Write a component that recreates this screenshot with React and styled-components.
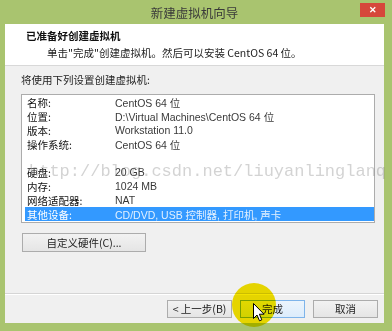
import React from "react"
import styled, { createGlobalStyle } from "styled-components"

const GlobalStyle = createGlobalStyle`
  html, body {
    margin: 0;
    padding: 0;
    overflow: hidden;
  }
  body {
    font-family: "Liberation Sans", "Noto Sans CJK SC", sans-serif;
  }
`

const rows = [
  ["名称:", "CentOS 64 位"],
  ["位置:", "D:\\Virtual Machines\\CentOS 64 位"],
  ["版本:", "Workstation 11.0"],
  ["操作系统:", "CentOS 64 位"],
  null,
  ["硬盘:", "20 GB"],
  ["内存:", "1024 MB"],
  ["网络适配器:", "NAT"],
  ["其他设备:", "CD/DVD, USB 控制器, 打印机, 声卡", true],
]

export default function App() {
  return (
    <>
      <GlobalStyle />
      <Window>
        <TitleBar>
          <span />
          <Title>新建虚拟机向导</Title>
          <CloseButton>✕</CloseButton>
        </TitleBar>
        <Content>
          <Header>
            <Heading>已准备好创建虚拟机</Heading>
            <SubHeading>单击"完成"创建虚拟机。然后可以安装 CentOS 64 位。</SubHeading>
          </Header>
          <Body>
            <Intro>将使用下列设置创建虚拟机:</Intro>
            <ListBox>
              {rows.map((row, i) =>
                row ? (
                  <Row key={i} selected={row[2]}>
                    <Label>{row[0]}</Label>
                    <Value>{row[1]}</Value>
                  </Row>
                ) : (
                  <Row key={i} />
                )
              )}
            </ListBox>
            <CustomButton>自定义硬件(C)...</CustomButton>
          </Body>
          <Footer>
            <DialogButton>&lt; 上一步(B)</DialogButton>
            <DialogButton primary>完成</DialogButton>
            <DialogButton>取消</DialogButton>
          </Footer>
        </Content>
        <Watermark>http://blog.csdn.net/liuyanlinglanq</Watermark>
        <Highlight />
        <Cursor width="12" height="19" viewBox="0 0 12 19">
          <path
            d="M0.5 0.5 L0.5 15.5 L4 12 L6.5 17.8 L8.8 16.8 L6.4 11.2 L11 11.2 Z"
            fill="#fff"
            stroke="#000"
            strokeWidth="1"
            strokeLinejoin="round"
          />
        </Cursor>
      </Window>
    </>
  )
}

const Window = styled.div`
  position: relative;
  width: 392px;
  height: 331px;
  box-sizing: border-box;
  background: #a9c46f;
  padding: 0 8px 8px 5px;
  display: flex;
  flex-direction: column;
  overflow: hidden;
`

const TitleBar = styled.div`
  height: 24px;
  display: grid;
  grid-template-columns: 1fr auto 1fr;
  align-items: center;
`

const Title = styled.div`
  font-family: "Noto Sans CJK SC", sans-serif;
  font-size: 12.5px;
  color: #3a3a3a;
  padding-top: 1px;
`

const CloseButton = styled.div`
  justify-self: end;
  align-self: start;
  margin-top: 3px;
  margin-right: -1px;
  width: 25px;
  height: 14px;
  background: #d6473b;
  color: #fff;
  font-size: 9px;
  font-weight: bold;
  display: flex;
  align-items: center;
  justify-content: center;
`

const Content = styled.div`
  flex: 1;
  display: flex;
  flex-direction: column;
  background: #f0f0f0;
`

const Header = styled.div`
  height: 42px;
  background: #fff;
  border-bottom: 1px solid #d8d8d8;
  padding: 5px 0 0 21px;
  box-sizing: border-box;
`

const Heading = styled.div`
  font-family: "Noto Sans CJK SC", sans-serif;
  font-size: 10.5px;
  font-weight: bold;
  color: #111;
  line-height: 14px;
`

const SubHeading = styled.div`
  font-family: "Noto Sans CJK SC", sans-serif;
  font-size: 10.5px;
  color: #222;
  line-height: 14px;
  margin-top: 3px;
  padding-left: 21px;
`

const Body = styled.div`
  flex: 1;
  padding: 7px 9px 0 16px;
  display: flex;
  flex-direction: column;
  align-items: flex-start;
`

const Intro = styled.div`
  font-family: "Noto Sans CJK SC", sans-serif;
  font-size: 10.5px;
  color: #222;
  line-height: 14px;
  margin-bottom: 7px;
`

const ListBox = styled.div`
  align-self: stretch;
  background: #fff;
  border: 1px solid #acacac;
  padding: 0 0 1px 3px;
  display: flex;
  flex-direction: column;
`

const Row = styled.div`
  height: 14px;
  display: flex;
  align-items: center;
  padding-left: 2px;
  font-family: "Noto Sans CJK SC", sans-serif;
  font-size: 10.5px;
  color: ${(p) => (p.selected ? "#fff" : "#111")};
  background: ${(p) => (p.selected ? "#3399ff" : "transparent")};
`

const Label = styled.span`
  width: 88px;
  flex: none;
`

const Value = styled.span`
  font-family: "Liberation Sans", "Noto Sans CJK SC", sans-serif;
  font-size: 10.5px;
  opacity: 0.85;
`

const CustomButton = styled.button`
  margin-top: 10px;
  margin-left: 1px;
  width: 124px;
  height: 19px;
  padding: 0;
  border: 1px solid #acacac;
  background: linear-gradient(#f2f2f2, #e5e5e5);
  font-family: "Noto Sans CJK SC", sans-serif;
  font-size: 10.5px;
  color: #222;
`

const Footer = styled.div`
  height: 30px;
  border-top: 1px solid #d5d5d5;
  box-shadow: inset 0 1px 0 #fff;
  display: flex;
  justify-content: flex-end;
  align-items: center;
  gap: 8px;
  padding: 0 6px 0 0;
  box-sizing: border-box;
`

const DialogButton = styled.button`
  width: 65px;
  height: 18px;
  padding: 0;
  border: 1px solid ${(p) => (p.primary ? "#7eb4ea" : "#acacac")};
  background: ${(p) =>
    p.primary ? "linear-gradient(#ecf4fc, #dcecfc)" : "linear-gradient(#f2f2f2, #e5e5e5)"};
  font-family: "Noto Sans CJK SC", sans-serif;
  font-size: 10.5px;
  color: #222;
`

const Watermark = styled.div`
  position: absolute;
  left: 29px;
  top: 162px;
  font-family: "Liberation Mono", monospace;
  font-size: 17px;
  line-height: 20px;
  color: rgba(110, 110, 110, 0.3);
  white-space: nowrap;
  pointer-events: none;
`

const Highlight = styled.div`
  position: absolute;
  left: 232px;
  top: 283px;
  width: 44px;
  height: 44px;
  border-radius: 50%;
  background: #f4e200;
  mix-blend-mode: multiply;
`

const Cursor = styled.svg`
  position: absolute;
  left: 253px;
  top: 303px;
`
